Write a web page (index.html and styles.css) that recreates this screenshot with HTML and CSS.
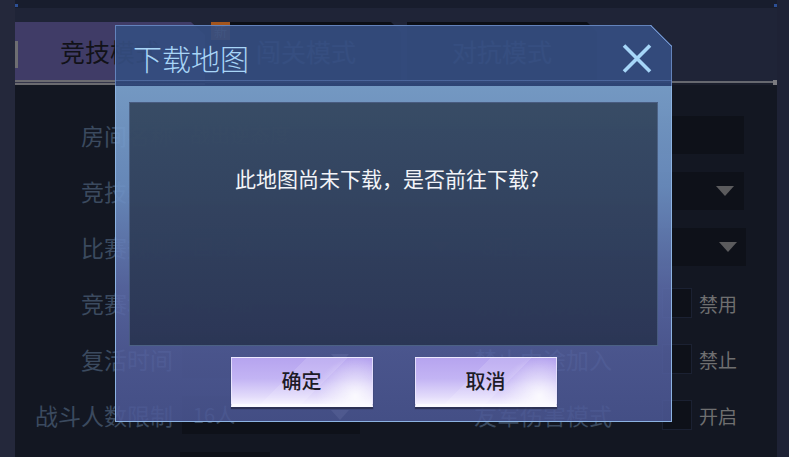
FILE: index.html
```html
<!DOCTYPE html>
<html lang="zh-CN">
<head>
<meta charset="utf-8">
<title>下载地图</title>
<link rel="stylesheet" href="styles.css">
</head>
<body>
<div class="app">
  <div class="side side-left"></div>
  <div class="main">
    <div class="topband"><i class="dot"></i><i class="dot"></i></div>
    <div class="header">
      <div class="tabs">
        <div class="tab tab-active"><span class="notch"></span><span class="tab-label">竞技模式</span></div>
        <div class="tab tab-dim tab-two"><span class="badge">新</span><span class="tab-label">闯关模式</span></div>
        <div class="tab tab-dim tab-three"><span class="tab-label">对抗模式</span></div>
      </div>
      <div class="underline"><span class="under-active"></span><span class="cap"></span></div>
    </div>
    <div class="content">
      <div class="row">
        <span class="label">房间名称</span>
        <div class="box box-input">战出逆态度</div>
      </div>
      <div class="row">
        <span class="label">竞技类型</span>
        <div class="box box-s">新爆破<i class="arrow"></i></div>
        <div class="box box-r2"><span class="sub">子类型</span><i class="arrow"></i></div>
      </div>
      <div class="row">
        <span class="label">比赛规则</span>
        <div class="box box-m">回合数<i class="arrow"></i></div>
        <div class="box box-r3">8回合<i class="arrow"></i></div>
      </div>
      <div class="row">
        <span class="label">竞赛地图</span>
        <div class="box box-s">科考船<i class="arrow"></i></div>
        <span class="rlabel">禁用投掷武器</span>
        <span class="check"></span>
        <span class="ctext">禁用</span>
      </div>
      <div class="row">
        <span class="label">复活时间</span>
        <div class="box box-s"><i class="arrow"></i></div>
        <span class="rlabel">禁止中途加入</span>
        <span class="check"></span>
        <span class="ctext">禁止</span>
      </div>
      <div class="row">
        <span class="label">战斗人数限制</span>
        <div class="box box-s">16人<i class="arrow"></i></div>
        <span class="rlabel">友军伤害模式</span>
        <span class="check"></span>
        <span class="ctext">开启</span>
      </div>
      <div class="row">
        <span class="label"></span>
        <div class="box box-xs"></div>
      </div>
    </div>
  </div>
  <div class="side side-right"></div>
</div>

<div class="dialog">
  <div class="dlg-head">
    <span class="dlg-title">下载地图</span>
    <svg class="dlg-close" width="30" height="29" viewBox="0 0 30 29" aria-label="关闭">
      <path d="M2 1.5 L28 27.5 M28 1.5 L2 27.5" stroke="#a6d6f8" stroke-width="3.6" fill="none"/>
    </svg>
  </div>
  <div class="dlg-body">
    <div class="dlg-panel">
      <p class="dlg-msg">此地图尚未下载，是否前往下载?</p>
    </div>
    <div class="dlg-actions">
      <button class="btn">确定</button>
      <button class="btn">取消</button>
    </div>
  </div>
</div>
</body>
</html>
```

FILE: styles.css
```css
* { box-sizing: border-box; }
html, body { margin: 0; padding: 0; }
body {
  width: 789px;
  height: 457px;
  overflow: hidden;
  position: relative;
  background: #23273a;
  font-family: "Noto Sans CJK SC", "Noto Sans", sans-serif;
}
.app { display: flex; height: 457px; overflow: hidden; }
.side { flex: none; }
.side-left { width: 15px; background: #24283b; }
.side-right { width: 12px; background: #1e2235; }
.main {
  width: 762px;
  flex: none;
  display: flex;
  flex-direction: column;
  height: 457px;
  overflow: hidden;
}

.topband {
  height: 8px;
  flex: none;
  background: #181d2d;
  display: flex;
  justify-content: space-between;
  align-items: flex-end;
  padding-bottom: 1px;
}
.dot { width: 3px; height: 3px; background: #2c4f96; }

.header {
  height: 77px;
  flex: none;
  background: #1f2437;
  padding-top: 14px;
  display: flex;
  flex-direction: column;
}
.tabs { display: flex; gap: 6px; height: 58px; }
.tab {
  width: 190px;
  height: 58px;
  display: flex;
  align-items: center;
  font-size: 25px;
  line-height: 1;
}
.tab-label { flex: 1; text-align: center; }
.tab-active {
  background: #403c67;
  color: #121218;
  clip-path: polygon(0 0, 176px 0, 190px 13px, 190px 100%, 0 100%);
}
.tab-active .tab-label { margin-right: 3px; }
.notch {
  width: 3px;
  height: 27px;
  background: #6e6e72;
  align-self: flex-start;
  margin-top: 19px;
}
.tab-dim {
  background: linear-gradient(#0b0e16 0 3px, #151925 3px);
  color: #4a5b80;
}
.tab-two { clip-path: polygon(0 0, 180px 0, 190px 10px, 190px 100%, 0 100%); }
.tab-three { clip-path: polygon(0 0, 180px 0, 190px 10px, 190px 100%, 0 100%); }
.tab-two .tab-label { margin-right: 19px; }
.badge {
  width: 19px;
  height: 18px;
  align-self: flex-start;
  background: #a4551c;
  color: #dcae84;
  font-size: 13px;
  line-height: 18px;
  text-align: center;
}

.underline {
  height: 5px;
  display: flex;
  align-items: center;
  background: linear-gradient(#1f2437 0 1px, #66686f 1px 3px, #1a1e2c 3px);
}
.under-active {
  width: 190px;
  height: 5px;
  background: linear-gradient(#6b6b70 0 2px, #34354a 2px 3px, #6b6b70 3px);
}
.cap { margin-left: auto; width: 4px; height: 5px; background: #7b7b80; }

.content {
  flex: 1;
  min-height: 0;
  overflow: hidden;
  background: #131722;
  padding-top: 22px;
}
.row { display: flex; align-items: center; height: 56px; }
.label {
  width: 158px;
  flex: none;
  text-align: right;
  font-size: 23px;
  line-height: 1;
  color: #3b4a5f;
  white-space: nowrap;
}
.box {
  flex: none;
  height: 38px;
  margin-left: 9px;
  background: #0e1119;
  display: flex;
  align-items: center;
  padding: 0 11px 0 11px;
  font-size: 20px;
  line-height: 1;
  color: #3a495d;
}
.box-input { width: 562px; padding-left: 8px; }
.box-s { width: 178px; }
.box-m { width: 278px; padding-right: 10px; }
.box-r2 { width: 274px; margin-left: 110px; padding-left: 24px; padding-right: 10px; }
.box-r3 { width: 276px; margin-left: 10px; padding-left: 12px; padding-right: 9px; }
.box-xs { width: 90px; margin-left: 7px; }
.arrow {
  margin-left: auto;
  width: 0;
  height: 0;
  border-left: 9px solid transparent;
  border-right: 9px solid transparent;
  border-top: 10px solid #5b5b5d;
}
.rlabel {
  width: 252px;
  flex: none;
  text-align: right;
  font-size: 23px;
  line-height: 1;
  color: #3b4a5f;
}
.check {
  width: 30px;
  height: 30px;
  margin-left: 50px;
  flex: none;
  background: #0e1119;
  border: 1px solid #1b2132;
}
.ctext { margin-left: 7px; font-size: 19px; line-height: 1; color: #6f6f70; }

/* dialog overlay */
.dialog {
  position: absolute;
  left: 115px;
  top: 25px;
  width: 557px;
  height: 397px;
  display: flex;
  flex-direction: column;
}
.dlg-head {
  height: 61px;
  flex: none;
  display: flex;
  align-items: center;
  justify-content: space-between;
  padding: 5px 20px 0 18px;
  clip-path: polygon(0 0, 536px 0, 100% 21px, 100% 100%, 0 100%);
  background:
    linear-gradient(225deg, transparent 0 14.3px, rgba(125,162,222,.85) 14.3px 15.8px, transparent 15.8px),
    linear-gradient(180deg, transparent 0 55px, rgba(105,135,195,.45) 55px 56px, rgba(38,56,104,.3) 56px),
    rgba(53,77,128,.93);
  box-shadow: inset 1px 1px 0 rgba(120,155,215,.7), inset -1px 0 0 rgba(120,155,215,.7);
}
.dlg-title {
  font-size: 29px;
  line-height: 1;
  font-weight: 300;
  color: #a8d5f7;
}
.dlg-close { display: block; margin-top: 1px; }
.dlg-body {
  flex: 1;
  border: 1px solid #8cb3e2;
  border-top: none;
  padding: 16px 13px 0;
  background: linear-gradient(180deg,
    rgba(123,162,206,.93) 0%,
    rgba(110,146,198,.91) 30%,
    rgba(92,108,170,.88) 60%,
    rgba(83,95,158,.86) 80%,
    rgba(76,88,150,.86) 100%);
}
.dlg-panel {
  height: 244px;
  border: 1px solid rgba(95,118,160,.55);
  background: linear-gradient(180deg, rgba(52,71,96,.94), rgba(41,52,82,.94));
  padding: 63px 13px 0 0;
  text-align: center;
}
.dlg-msg {
  margin: 0;
  font-size: 21px;
  line-height: 24px;
  color: #f2f4f8;
}
.dlg-actions {
  display: flex;
  justify-content: center;
  gap: 42px;
  margin-top: 11px;
}
.btn {
  width: 142px;
  height: 50px;
  padding: 0;
  border: 1px solid rgba(236,232,255,.8);
  border-bottom: 3px solid #fbfaff;
  box-shadow: 0 2px 1px rgba(25,25,45,.55);
  font-family: inherit;
  font-size: 20px;
  font-weight: 500;
  line-height: 1;
  color: #1d1b26;
  background:
    radial-gradient(circle at 88% 82%, rgba(255,255,255,.85), rgba(255,255,255,0) 30%),
    linear-gradient(135deg, rgba(255,255,255,0) 0 40%, rgba(255,255,255,.13) 40% 62%, rgba(255,255,255,0) 62%),
    linear-gradient(180deg, #b6a4ef 0%, #c3b4f4 45%, #e4ddfb 85%, #f4f1ff 100%);
}
```
